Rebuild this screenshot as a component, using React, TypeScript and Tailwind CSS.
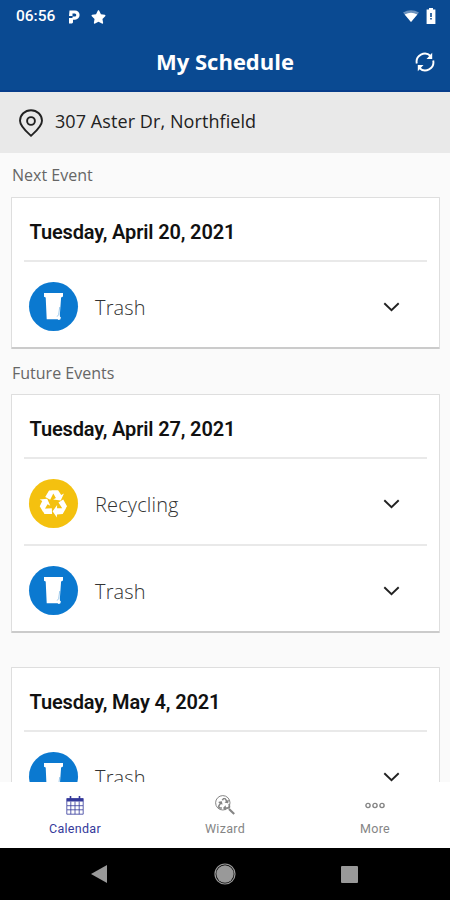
import { FaRecycle, FaStar } from "react-icons/fa";

type Pickup = "Trash" | "Recycling";

type ScheduleDay = {
  date: string;
  pickups: Pickup[];
};

const nextEvent: ScheduleDay = {
  date: "Tuesday, April 20, 2021",
  pickups: ["Trash"],
};

const futureEvents: ScheduleDay[] = [
  { date: "Tuesday, April 27, 2021", pickups: ["Recycling", "Trash"] },
  { date: "Tuesday, May 4, 2021", pickups: ["Trash"] },
];

const StatusBar = () => (
  <div className="flex h-8 items-center justify-between pr-[14px] pl-4 text-white">
    <div className="flex items-center pt-px">
      <span className="w-[52px] font-['Roboto',sans-serif] text-[15.5px] font-medium">
        06:56
      </span>
      <svg className="h-[14px] w-3" viewBox="0 0 12 14">
        <path
          d="M1.500.5H7a4.600 4.600 0 0 1 0 9.200H5V12.500L4 13.500H1V8h3.500V6.600H6.800a1.500 1.500 0 0 0 0-3H4.500V6H1z"
          fill="currentColor"
        />
      </svg>
      <FaStar className="ml-[11px] h-[14px] w-[15px]" />
    </div>
    <div className="flex items-center gap-[7px]">
      <svg className="h-3 w-4" viewBox="0 0 16 12">
        <path d="M0 2.5Q8-2 16 2.5L8 12Z" fill="currentColor" opacity="0.4" />
        <path d="M1.7 4.4Q8 1 14.3 4.4L8 12Z" fill="currentColor" />
      </svg>
      <svg className="h-4 w-[10px]" viewBox="0 0 10 16">
        <path d="M3 0h4v1.6h2.4V16H.6V1.6H3z" fill="currentColor" />
        <path d="M4.2 5h1.6v4H4.2zM4.2 10h1.6v1.4H4.2z" fill="#0a4a92" />
      </svg>
    </div>
  </div>
);

const RefreshIcon = () => (
  <svg className="h-5 w-5" viewBox="0 0 20 20" fill="none">
    <path
      d="M1.8 11.5A8.2 8.2 0 0 1 15.6 4M18.2 8.5A8.2 8.2 0 0 1 4.4 16"
      stroke="currentColor"
      strokeWidth="1.9"
    />
    <path d="M17.2.8v6.1h-5.7zM2.8 19.2v-6.1h5.7z" fill="currentColor" />
  </svg>
);

const PinIcon = () => (
  <svg
    className="h-7 w-6"
    viewBox="0 0 24 28"
    fill="none"
    stroke="currentColor"
    strokeWidth="1.9"
    strokeLinejoin="round"
  >
    <path d="M12 26.8C8 23 1 17.5 1 11.8a11 10.6 0 0 1 22 0c0 5.7-7 11.2-11 15z" />
    <circle cx="12" cy="12" r="3.9" />
  </svg>
);

const ChevronIcon = () => (
  <svg className="mt-0.5 h-[10px] w-[17px]" viewBox="0 0 17 10" fill="none">
    <path d="M1.3 1.3l7.2 7 7.2-7" stroke="#222" strokeWidth="1.9" />
  </svg>
);

const BinIcon = () => (
  <svg className="h-[27px] w-[19px]" viewBox="0 0 19 27" fill="white">
    <path d="M0 0h19v3.6l-1.9.9-1.2 16.5v2.4l1 1.1-.6 2-1.7.5-1-.8H2.7L1.7 4.6 0 3.8z" />
    <path
      d="M15.7 14l-1 7.600-1.600 2"
      stroke="#0b79d0"
      strokeWidth=".4"
      fill="none"
    />
  </svg>
);

// one folded arrow, turned three times around the centre
const foldedArrow =
  "M-8-6.2L-4.3-12.6H-2.8L1-12-3.2-3.7zM-2-12.8H4.4L7.5-8.2l2.6-1.4L7-3-.4-3.8l2.7-1.5z";

const RecycleIcon = () => (
  <svg className="h-[29px] w-[29px]" viewBox="-14 -14 28 28" fill="white">
    <path d={foldedArrow} />
    <path d={foldedArrow} transform="rotate(120)" />
    <path d={foldedArrow} transform="rotate(240)" />
  </svg>
);

const PickupRow = ({ pickup }: { pickup: Pickup }) => (
  <div className="mx-3 flex h-[87px] items-center border-t-2 border-[#e9e9e9] pt-[3px] pr-[27px] pl-[5px]">
    <div
      className={`flex h-[49px] w-[49px] items-center justify-center rounded-full ${
        pickup === "Trash" ? "bg-[#0b79d0]" : "bg-[#f4c10f]"
      }`}
    >
      {pickup === "Trash" ? <BinIcon /> : <RecycleIcon />}
    </div>
    <span className="ml-[17px] flex-1 pt-[3px] font-['Open_Sans',sans-serif] text-[20px] leading-7 font-[330] tracking-[0.15px] text-[#333]">
      {pickup}
    </span>
    <ChevronIcon />
  </div>
);

const DayCard = ({ day }: { day: ScheduleDay }) => (
  <section className="mr-[10px] ml-[11px] rounded-[1px] border border-b-2 border-[#dedede] border-b-[#cbcbcb] bg-white">
    <h2 className="flex h-[62px] items-center pt-[5px] pl-[17.5px] font-['Roboto',sans-serif] text-[20px] font-semibold tracking-[-0.14px] text-[#111]">
      {day.date}
    </h2>
    {day.pickups.map((pickup) => (
      <PickupRow key={pickup} pickup={pickup} />
    ))}
  </section>
);

const CalendarIcon = () => (
  <svg className="h-[19px] w-[18px]" viewBox="0 0 18 19" fill="none" stroke="currentColor">
    <path
      d="M.8 2.5h16.4v15.7H.8zM4.8 5.5v12.7M9 5.5v12.7M13.2 5.5v12.7M1 9.7h16M1 13.8h16"
      strokeWidth=".8"
    />
    <path d="M.8 4h16.4" strokeWidth="3" />
    <path d="M4.5 0v3.5M13.5 0v3.5" strokeWidth="1.6" />
  </svg>
);

const WizardIcon = () => (
  <svg className="h-5 w-5" viewBox="0 0 20 20" fill="none" stroke="currentColor">
    <circle cx="7.8" cy="7.8" r="7.2" />
    <path d="M14 14l5.2 5" strokeWidth="2.2" />
    <FaRecycle x="3" y="2.8" width="9.6" height="9.6" strokeWidth="0" />
  </svg>
);

const MoreIcon = () => (
  <svg className="h-[7px] w-5" viewBox="0 0 20 7" fill="none" stroke="currentColor" strokeWidth="1.4">
    <circle cx="3" cy="3.5" r="2.1" />
    <circle cx="10" cy="3.5" r="2.1" />
    <circle cx="17" cy="3.5" r="2.1" />
  </svg>
);

const tabs = [
  { label: "Calendar", icon: <CalendarIcon />, active: true },
  { label: "Wizard", icon: <WizardIcon />, active: false },
  { label: "More", icon: <MoreIcon />, active: false },
];

const App = () => {
  return (
    <div className="flex h-[900px] w-[450px] flex-col overflow-hidden bg-[#fafafa]">
      <header className="h-[92px] shrink-0 border-b-2 border-[#073d8b] bg-[#0a4a92] text-white">
        <StatusBar />
        <div className="grid h-[60px] grid-cols-[1fr_auto_1fr] items-center">
          <h1 className="col-start-2 pb-0.5 font-['Open_Sans',sans-serif] text-[22px] font-bold">
            My Schedule
          </h1>
          <button className="mr-[15px] justify-self-end">
            <RefreshIcon />
          </button>
        </div>
      </header>

      <div className="flex h-[61px] shrink-0 items-center bg-[#e9e9e9] pl-[19px] text-[#222]">
        <PinIcon />
        <span className="ml-3 pb-[3px] font-['Open_Sans',sans-serif] text-[18px] tracking-[0.08px]">
          307 Aster Dr, Northfield
        </span>
      </div>

      <main className="min-h-0 flex-1 overflow-hidden">
        <h3 className="flex h-11 items-center pl-3 font-['Open_Sans',sans-serif] text-[16px] text-[#666]">
          Next Event
        </h3>
        <DayCard day={nextEvent} />
        <h3 className="flex h-[45px] items-center pt-[3px] pl-3 font-['Open_Sans',sans-serif] text-[16px] text-[#666]">
          Future Events
        </h3>
        <div className="flex flex-col gap-[34px]">
          {futureEvents.map((day) => (
            <DayCard key={day.date} day={day} />
          ))}
        </div>
      </main>

      <nav className="grid h-[66px] shrink-0 grid-cols-3 bg-white font-['Roboto',sans-serif] text-[12.5px]">
        {tabs.map((tab) => (
          <button
            key={tab.label}
            className={`flex flex-col items-center pt-3 ${
              tab.active ? "text-[#34399a]" : "text-[#858585]"
            }`}
          >
            <span className="flex h-[22px] items-center">{tab.icon}</span>
            <span className="mt-1 tracking-[0.3px]">{tab.label}</span>
          </button>
        ))}
      </nav>

      <footer className="grid h-[52px] shrink-0 grid-cols-[75px_100px_100px_100px_75px] items-center justify-items-center bg-black text-[#999]">
        <svg className="col-start-2 mr-[52px] h-[18px] w-4" viewBox="0 0 16 18">
          <path d="M16 0v18L0 9z" fill="currentColor" />
        </svg>
        <svg className="col-start-3 h-[22px] w-[22px]" viewBox="0 0 22 22">
          <circle cx="11" cy="11" r="8.7" fill="currentColor" />
          <circle cx="11" cy="11" r="10" fill="none" stroke="currentColor" strokeWidth="1.2" />
        </svg>
        <span className="col-start-4 ml-[49px] h-[17px] w-[17px] rounded-[1px] bg-[#999]" />
      </footer>
    </div>
  );
};

export default App;
